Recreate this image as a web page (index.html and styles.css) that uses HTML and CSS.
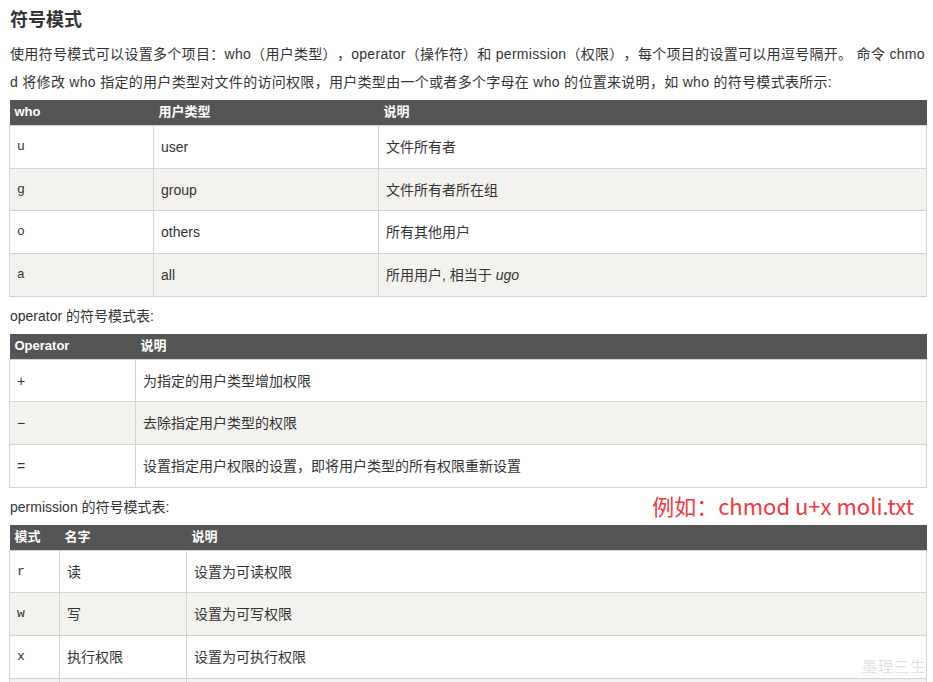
FILE: index.html
```html
<!DOCTYPE html>
<html lang="zh-CN">
<head>
<meta charset="utf-8">
<title>符号模式</title>
<link rel="stylesheet" href="styles.css">
</head>
<body>
<div class="page">
  <h2 class="title">符号模式</h2>
  <p class="text intro">使用符号模式可以设置多个项目：who（用户类型），operator（操作符）和 permission（权限），每个项目的设置可以用逗号隔开。 命令 chmod 将修改 who 指定的用户类型对文件的访问权限，用户类型由一个或者多个字母在 who 的位置来说明，如 who 的符号模式表所示:</p>
  <table class="tbl">
    <colgroup><col style="width:144px"><col style="width:225px"><col></colgroup>
    <thead><tr><th>who</th><th>用户类型</th><th>说明</th></tr></thead>
    <tbody>
      <tr><td class="mono">u</td><td>user</td><td>文件所有者</td></tr>
      <tr><td class="mono">g</td><td>group</td><td>文件所有者所在组</td></tr>
      <tr><td class="mono">o</td><td>others</td><td>所有其他用户</td></tr>
      <tr><td class="mono">a</td><td>all</td><td>所用用户, 相当于 <em>ugo</em></td></tr>
    </tbody>
  </table>
  <p class="text">operator 的符号模式表:</p>
  <table class="tbl">
    <colgroup><col style="width:126px"><col></colgroup>
    <thead><tr><th>Operator</th><th>说明</th></tr></thead>
    <tbody>
      <tr><td>+</td><td>为指定的用户类型增加权限</td></tr>
      <tr><td>−</td><td>去除指定用户类型的权限</td></tr>
      <tr><td>=</td><td>设置指定用户权限的设置，即将用户类型的所有权限重新设置</td></tr>
    </tbody>
  </table>
  <div class="row">
    <p class="text">permission 的符号模式表:</p>
    <span class="example">例如：chmod u+x moli.txt</span>
  </div>
  <table class="tbl">
    <colgroup><col style="width:50px"><col style="width:127px"><col></colgroup>
    <thead><tr><th>模式</th><th>名字</th><th>说明</th></tr></thead>
    <tbody>
      <tr><td class="mono">r</td><td>读</td><td>设置为可读权限</td></tr>
      <tr><td class="mono">w</td><td>写</td><td>设置为可写权限</td></tr>
      <tr><td class="mono">x</td><td>执行权限</td><td>设置为可执行权限</td></tr>
      <tr><td class="mono">X</td><td>特殊执行权限</td><td>只有当文件为目录文件，或者其他类型的用户有可执行权限时，才将文件权限设置可执行</td></tr>
    </tbody>
  </table>
</div>
<div class="watermark">墨理三生</div>
</body>
</html>
```

FILE: styles.css
```css
html, body {
  margin: 0;
  padding: 0;
  background: #fff;
}
body {
  font-family: "Liberation Sans", Arial, "Noto Sans CJK SC", sans-serif;
  color: #333;
  font-size: 14px;
  overflow: hidden;
  height: 682px;
  text-spacing-trim: space-all;
}
.page {
  padding: 0 6px 0 9px;
  width: 918px;
}
.title {
  margin: 0;
  padding: 8px 0 0 1px;
  height: 32px;
  font-size: 18px;
  line-height: 24px;
  font-weight: bold;
  color: #333;
}
.text {
  margin: 0;
  padding-left: 1px;
  line-height: 28px;
  font-size: 14px;
  word-break: break-all;
}
.intro {
  letter-spacing: 0.3px;
}
.tbl + .text,
.tbl + .row {
  margin-top: 5px;
}
.text + .tbl,
.row + .tbl {
  margin-top: 4px;
}
.tbl {
  width: 918px;
  border-collapse: collapse;
  table-layout: fixed;
  font-size: 14px;
}
.tbl th {
  background: #555;
  color: #fff;
  font-weight: bold;
  font-size: 13px;
  text-align: left;
  padding: 2px 5px 4px;
  line-height: 19px;
  border: none;
}
.tbl td {
  padding: 11px 6px 10px 7px;
  line-height: 20.67px;
  border: 1px solid #d4d4d4;
  vertical-align: middle;
}
.tbl tbody tr:nth-child(even) td {
  background: #f3f2ef;
}
.tbl td.mono {
  font-family: "Liberation Mono", "Courier New", monospace;
  font-size: 13px;
}
.tbl em {
  font-style: italic;
}
.row {
  display: flex;
  justify-content: space-between;
  align-items: center;
}
.example {
  color: #f0393c;
  font-size: 22px;
  line-height: 28px;
  margin-right: 13px;
  position: relative;
  top: -2px;
  font-family: "Noto Sans CJK SC", "Liberation Sans", sans-serif;
}
.watermark {
  position: absolute;
  left: 862px;
  top: 655px;
  font-size: 15px;
  color: #e0e0e0;
  letter-spacing: 1px;
  font-family: "Noto Sans CJK SC", sans-serif;
}
```
